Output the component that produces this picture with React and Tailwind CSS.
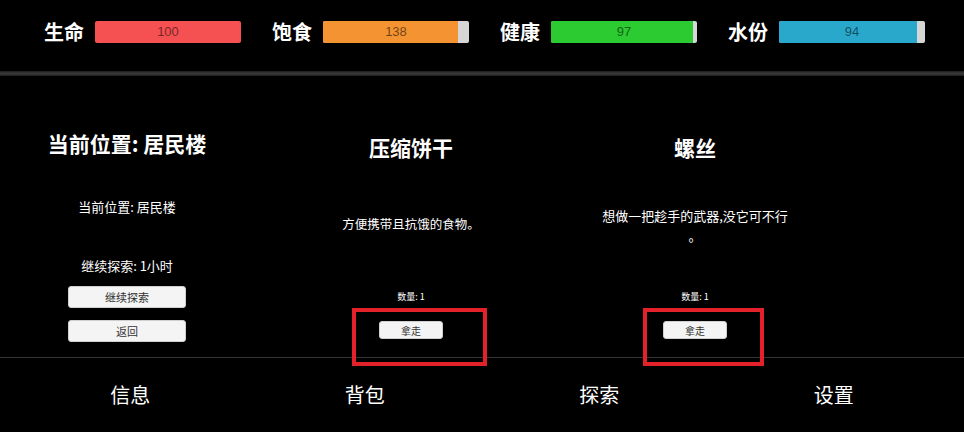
import React from "react";

const stats = [
  { label: "生命", value: "100", color: "bg-[#f55152]", fill: "w-full" },
  { label: "饱食", value: "138", color: "bg-[#f39331]", fill: "w-[135px]" },
  { label: "健康", value: "97", color: "bg-[#2bcb31]", fill: "w-[142px]" },
  { label: "水份", value: "94", color: "bg-[#29a8cc]", fill: "w-[138px]" },
];

const navItems = ["信息", "背包", "探索", "设置"];

const StatBar = ({ label, value, color, fill }) => (
  <div className="flex items-center gap-[11px]">
    <span className="text-[20px] font-bold text-white leading-none">{label}</span>
    <div className="relative w-[146px] h-[22px] rounded-[2px] bg-[#d6d6d6] overflow-hidden">
      <div className={`h-full ${color} ${fill}`}></div>
      <span className="absolute inset-0 flex items-center justify-center text-[13px] text-black/55 font-['Liberation_Sans',sans-serif]">
        {value}
      </span>
    </div>
  </div>
);

const Button = ({ children, className }) => (
  <button className={`bg-[#f4f4f4] border border-[#cfcfcf] rounded-[3px] text-[#333] flex items-center justify-center ${className}`}>
    {children}
  </button>
);

const App = () => {
  return (
    <div className="relative w-[964px] h-[432px] bg-black overflow-hidden text-white font-['Noto_Sans_CJK_SC','Noto_Sans',sans-serif]">
      {/* status bars */}
      <div className="h-[71px] flex items-center gap-[31px] pl-[44px] pb-[7px]">
        {stats.map((s) => (
          <StatBar key={s.label} {...s} />
        ))}
      </div>
      <div className="h-[5px] bg-gradient-to-b from-[#1e1e1e] via-[#3a3a3a] to-[#1e1e1e]"></div>

      {/* panels */}
      <div className="h-[281px] flex gap-[30px]">
        <div className="w-[254px] flex flex-col items-center">
          <h2 className="mt-[53px] text-[21px] leading-[28px] font-bold">当前位置: 居民楼</h2>
          <p className="mt-[40px] text-[13px] leading-[20px]">当前位置: 居民楼</p>
          <p className="mt-[39px] text-[13px] leading-[20px]">继续探索: 1小时</p>
          <Button className="mt-[10px] w-[118px] h-[22px] text-[11px]">继续探索</Button>
          <Button className="mt-[12px] w-[118px] h-[22px] text-[11px]">返回</Button>
        </div>

        <div className="w-[254px] flex flex-col items-center">
          <h2 className="mt-[57px] text-[21px] leading-[28px] font-bold">压缩饼干</h2>
          <p className="mt-[53px] w-[192px] text-center text-[12.5px] leading-[20px]">方便携带且抗饿的食物。</p>
          <p className="mt-[57px] text-[9px] leading-[12px]">数量: 1</p>
          <Button className="mt-[18px] w-[64px] h-[18px] text-[10px]">拿走</Button>
        </div>

        <div className="w-[254px] flex flex-col items-center">
          <h2 className="mt-[57px] text-[21px] leading-[28px] font-bold">螺丝</h2>
          <p className="mt-[45px] w-[200px] text-center text-[13px] leading-[20px]">
            想做一把趁手的武器,没它可不行
            <br />。
          </p>
          <p className="mt-[45px] text-[9px] leading-[12px]">数量: 1</p>
          <Button className="mt-[18px] w-[64px] h-[18px] text-[10px]">拿走</Button>
        </div>
      </div>

      {/* bottom nav */}
      <div className="border-t border-[#333] h-[75px] flex px-[13px]">
        {navItems.map((n) => (
          <div key={n} className="flex-1 flex items-center justify-center text-[20px] font-normal">
            {n}
          </div>
        ))}
      </div>

      {/* highlight boxes */}
      <div className="absolute left-[352px] top-[308px] w-[135px] h-[58px] border-[4px] border-[#e3212a]"></div>
      <div className="absolute left-[643px] top-[308px] w-[121px] h-[58px] border-[4px] border-[#e3212a]"></div>
    </div>
  );
};

export default App;
